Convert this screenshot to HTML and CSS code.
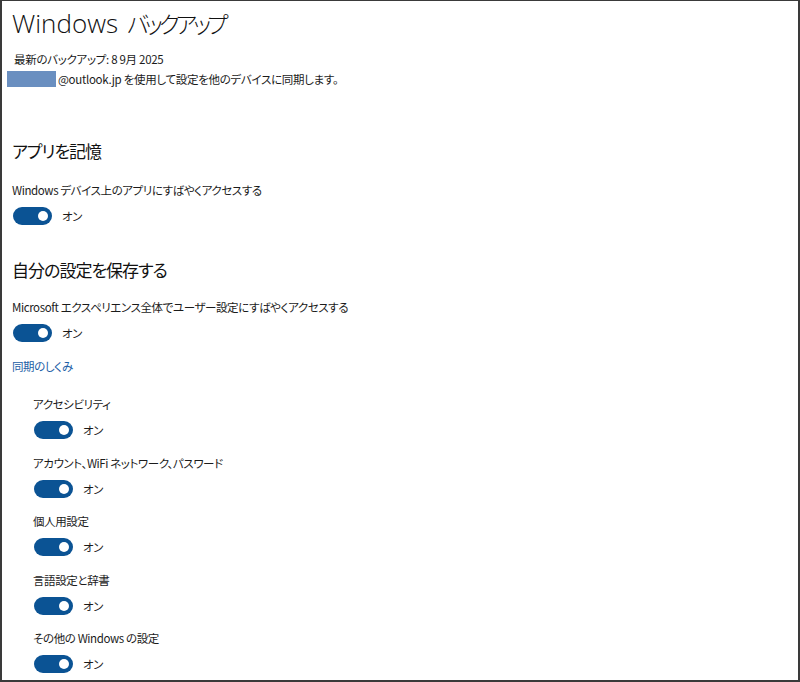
FILE: index.html
```html
<!DOCTYPE html>
<html lang="ja">
<head>
<meta charset="utf-8">
<title>Windows バックアップ</title>
<link rel="stylesheet" href="styles.css">
</head>
<body>
<div class="window">
  <h1 class="title"><span class="title-en">Windows</span> <span class="title-jp">バックアップ</span></h1>
  <p class="meta first">最新のバックアップ: 8 9月 2025</p>
  <p class="meta"><span class="redact"></span>@outlook.jp を使用して設定を他のデバイスに同期します。</p>

  <section class="group">
    <h2 class="heading">アプリを記憶</h2>
    <div class="setting">
      <div class="label">Windows デバイス上のアプリにすばやくアクセスする</div>
      <div class="toggle-row"><span class="toggle"><span class="knob"></span></span><span class="state">オン</span></div>
    </div>
  </section>

  <section class="group second">
    <h2 class="heading">自分の設定を保存する</h2>
    <div class="setting">
      <div class="label">Microsoft エクスペリエンス全体でユーザー設定にすばやくアクセスする</div>
      <div class="toggle-row"><span class="toggle"><span class="knob"></span></span><span class="state">オン</span></div>
    </div>
    <a class="link" href="#">同期のしくみ</a>

    <div class="sublist">
      <div class="setting sub">
        <div class="label">アクセシビリティ</div>
        <div class="toggle-row"><span class="toggle"><span class="knob"></span></span><span class="state">オン</span></div>
      </div>
      <div class="setting sub">
        <div class="label">アカウント、WiFi ネットワーク、パスワード</div>
        <div class="toggle-row"><span class="toggle"><span class="knob"></span></span><span class="state">オン</span></div>
      </div>
      <div class="setting sub">
        <div class="label">個人用設定</div>
        <div class="toggle-row"><span class="toggle"><span class="knob"></span></span><span class="state">オン</span></div>
      </div>
      <div class="setting sub">
        <div class="label">言語設定と辞書</div>
        <div class="toggle-row"><span class="toggle"><span class="knob"></span></span><span class="state">オン</span></div>
      </div>
      <div class="setting sub">
        <div class="label">その他の Windows の設定</div>
        <div class="toggle-row"><span class="toggle"><span class="knob"></span></span><span class="state">オン</span></div>
      </div>
    </div>
  </section>
</div>
</body>
</html>
```

FILE: styles.css
```css
html, body {
  margin: 0;
  padding: 0;
  background: #ffffff;
}

body {
  font-family: "Noto Sans CJK JP", "Noto Sans", sans-serif;
  font-feature-settings: "palt" 1;
  color: #1b1b1b;
}

.window {
  box-sizing: border-box;
  width: 800px;
  height: 682px;
  overflow: hidden;
  border-top: 1px solid #3a3a3a;
  border-left: 2px solid #3a3a3a;
  border-right: 2px solid #3a3a3a;
  border-bottom: 2px solid #3a3a3a;
  padding: 5px 10px 0 10px;
}

.title {
  margin: 0;
  height: 34px;
  display: flex;
  align-items: center;
  font-size: 26px;
  line-height: 34px;
  font-weight: 300;
  color: #111;
  white-space: nowrap;
}

.title-en {
  font-family: "Open Sans", sans-serif;
  font-weight: 300;
  line-height: 34px;
}

.title-jp {
  font-family: "Noto Sans CJK JP", sans-serif;
  font-size: 23px;
  font-weight: 300;
  line-height: 34px;
  letter-spacing: -4px;
  margin-left: 9px;
}

.meta {
  margin: 0;
  padding-left: 2px;
  font-size: 11.5px;
  letter-spacing: -0.3px;
  line-height: 20px;
  display: flex;
  align-items: center;
}

.meta.first {
  margin-top: 9px;
}

.redact {
  display: inline-block;
  width: 49px;
  height: 16px;
  margin-left: -7px;
  margin-right: 2px;
  background: #6a8fc0;
}

.group {
  margin-top: 48px;
}

.group.second {
  margin-top: 30px;
}

.heading {
  margin: 0 0 15px 0;
  font-size: 17px;
  letter-spacing: -1px;
  line-height: 28px;
  font-weight: 400;
  color: #111;
}

.second .heading {
  margin-bottom: 13px;
}

.label {
  font-size: 11.5px;
  letter-spacing: -0.4px;
  line-height: 20px;
}

.toggle-row {
  margin-top: 6px;
  height: 20px;
  display: flex;
  align-items: center;
  gap: 10px;
  padding-left: 1px;
}

.toggle {
  box-sizing: border-box;
  width: 39px;
  height: 18px;
  border-radius: 9px;
  background: #0b5394;
  display: flex;
  align-items: center;
  justify-content: flex-end;
  padding-right: 4px;
}

.knob {
  width: 10px;
  height: 10px;
  border-radius: 50%;
  background: #ffffff;
}

.state {
  font-size: 11.5px;
  letter-spacing: -0.4px;
  line-height: 20px;
}

.link {
  display: block;
  margin-top: 13px;
  font-size: 11.5px;
  letter-spacing: -0.4px;
  line-height: 20px;
  color: #1c5ea6;
  text-decoration: none;
}

.sublist {
  margin-top: 18px;
  padding-left: 21px;
  display: flex;
  flex-direction: column;
  gap: 12.5px;
}
```
